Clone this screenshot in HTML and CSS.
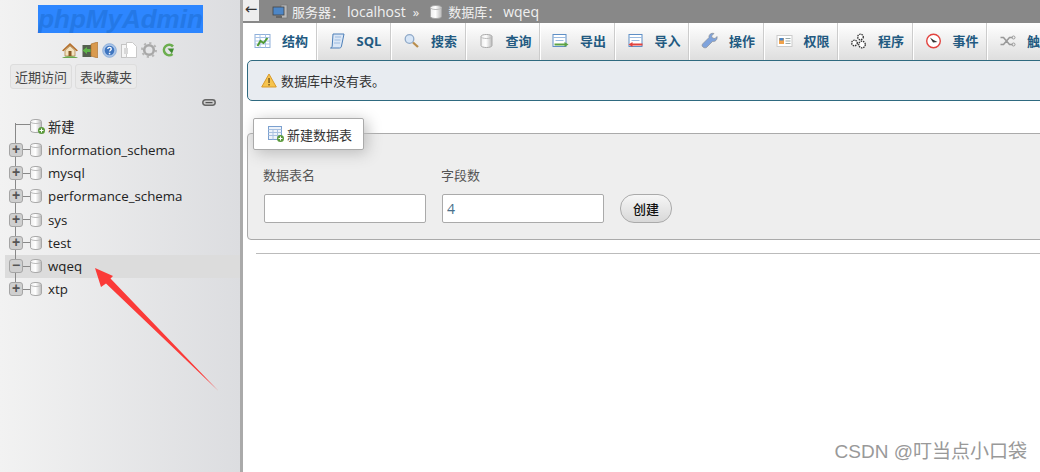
FILE: index.html
```html
<!DOCTYPE html>
<html lang="zh">
<head>
<meta charset="utf-8">
<title>phpMyAdmin</title>
<link rel="stylesheet" href="styles.css">
</head>
<body>
<svg class="defs" width="0" height="0" aria-hidden="true">
  <defs>
    <linearGradient id="dbg" x1="0" x2="1" y1="0" y2="0"><stop offset="0" stop-color="#eee"/><stop offset=".45" stop-color="#fff"/><stop offset="1" stop-color="#bbb"/></linearGradient>
    <symbol id="db" viewBox="0 0 12 14">
      <path d="M.5 2.500C.5 1.200 3 .5 6 .5s5.500.7 5.500 2v9c0 1.300-2.500 2-5.500 2s-5.500-.7-5.500-2z" fill="url(#dbg)" stroke="#a8a8a8"/>
      <path d="M.5 2.500c0 1.300 2.500 2 5.500 2s5.500-.7 5.500-2" fill="none" stroke="#bbb"/>
    </symbol>
  </defs>
</svg>
<div class="page">
  <aside class="sidebar">
    <div class="logo"><span class="logo-text">phpMyAdmin</span></div>
    <div class="quick-icons">
      <svg width="16" height="16" viewBox="0 0 16 16"><path d="M0 8.500L8 1l8 7.500-1.500.8L8 3.500 1.500 9.300z" fill="#b5702c"/><path d="M3 8.500L8 4l5 4.500V14H3z" fill="#f3e3c0" stroke="#a97b3c" stroke-width=".7"/><rect x="6.500" y="9" width="3" height="5" fill="#8a5a24"/><path d="M0 16c2-2.500 14-2.500 16 0z" fill="#6aa84f"/></svg>
      <svg width="16" height="16" viewBox="0 0 16 16"><rect x=".5" y="3" width="9" height="12" fill="#55604f"/><path d="M9 2l6.500-2v16L9 14z" fill="#d99a4e" stroke="#a86c26" stroke-width=".6"/><path d="M.5 8.500L5 5v2h3.500v3H5v2z" fill="#5fb548"/></svg>
      <svg width="15" height="15" viewBox="0 0 15 15"><circle cx="7.500" cy="7.500" r="6.800" fill="#a9c4e8" stroke="#8fb0da"/><circle cx="7.500" cy="7.500" r="4.800" fill="#3f75bf"/><path d="M5.800 6c0-2.200 3.500-2.200 3.500 0 0 1.300-1.700 1.300-1.700 2.600" fill="none" stroke="#fff" stroke-width="1.300"/><rect x="6.800" y="9.800" width="1.500" height="1.500" fill="#fff"/></svg>
      <svg width="16" height="16" viewBox="0 0 16 16"><rect x=".5" y="2.500" width="9" height="13" fill="#f5f5f5" stroke="#c4c4c4"/><path d="M5.500.5h6l4 4v11h-10z" fill="#fff" stroke="#c9c9c9"/><rect x="3" y="6" width="4" height="6" fill="#d8d8d8"/></svg>
      <svg width="16" height="16" viewBox="0 0 16 16"><circle cx="8" cy="8" r="4.800" fill="none" stroke="#a8a8a8" stroke-width="2.600"/><circle cx="8" cy="8" r="7" fill="none" stroke="#b5b5b5" stroke-width="2" stroke-dasharray="2.200 3.300"/></svg>
      <svg width="14" height="16" viewBox="0 0 14 16"><path d="M12 4.500A5.200 5.200 0 1 0 11.500 12" fill="none" stroke="#6cae4f" stroke-width="2.600"/><path d="M6.500 6.500h6.500L11 11.500z" fill="#3f8c2f"/></svg>
    </div>
    <div class="nav-tabs">
      <span class="nav-btn">近期访问</span>
      <span class="nav-btn">表收藏夹</span>
    </div>
    <div class="link-row">
      <svg width="14" height="7" viewBox="0 0 14 7"><rect x=".8" y=".8" width="12.400" height="5.400" rx="2.700" fill="#ccc" stroke="#666" stroke-width="1.500"/><rect x="3.500" y="3" width="7" height="1.200" fill="#555"/></svg>
    </div>
    <ul class="tree">
      <li class="row row-first">
        <span class="exp exp-none"></span><span class="conn conn-long"></span>
        <span class="db-wrap"><svg class="db-icon" width="12" height="14"><use href="#db"/></svg><svg class="db-plus" width="7" height="7" viewBox="0 0 7 7"><circle cx="3.500" cy="3.500" r="3.500" fill="#5b9a3c"/><path d="M1.500 3.500h4M3.500 1.500v4" stroke="#fff"/></svg></span>
        <span class="name">新建</span>
      </li>
      <li class="row"><span class="exp">+</span><span class="conn"></span><svg class="db-icon" width="12" height="14"><use href="#db"/></svg><span class="name">information_schema</span></li>
      <li class="row"><span class="exp">+</span><span class="conn"></span><svg class="db-icon" width="12" height="14"><use href="#db"/></svg><span class="name">mysql</span></li>
      <li class="row"><span class="exp">+</span><span class="conn"></span><svg class="db-icon" width="12" height="14"><use href="#db"/></svg><span class="name">performance_schema</span></li>
      <li class="row"><span class="exp">+</span><span class="conn"></span><svg class="db-icon" width="12" height="14"><use href="#db"/></svg><span class="name">sys</span></li>
      <li class="row"><span class="exp">+</span><span class="conn"></span><svg class="db-icon" width="12" height="14"><use href="#db"/></svg><span class="name">test</span></li>
      <li class="row row-active"><span class="exp">−</span><span class="conn"></span><svg class="db-icon" width="12" height="14"><use href="#db"/></svg><span class="name">wqeq</span></li>
      <li class="row row-last"><span class="exp">+</span><span class="conn"></span><svg class="db-icon" width="12" height="14"><use href="#db"/></svg><span class="name">xtp</span></li>
    </ul>
  </aside>

  <main class="main">
    <div class="topbar">
      <span class="back">←</span>
      <svg class="crumb-icon" width="16" height="15" viewBox="0 0 16 15"><rect x="9" y="1" width="6" height="13" fill="#b8b8b8" stroke="#777" stroke-width=".7"/><rect x="1" y="3" width="11" height="8" fill="#4d86c6" stroke="#444" stroke-width=".8"/><rect x="4" y="12" width="6" height="2" fill="#666"/></svg>
      <span class="crumb">服务器：</span>
      <span class="crumb crumb-val">localhost</span>
      <span class="crumb crumb-sep">»</span>
      <svg class="crumb-db" width="12" height="14"><use href="#db"/></svg>
      <span class="crumb crumb-second">数据库：</span>
      <span class="crumb crumb-val">wqeq</span>
    </div>

    <nav class="tabs">
      <a class="tab tab-active">
        <svg width="16" height="16" viewBox="0 0 16 16"><rect x=".5" y="1.500" width="15" height="13" fill="#fff" stroke="#8fb0da"/><path d="M5.500 1.500v13M11 1.500v13M.5 4.500h15M.5 8h15M.5 11h15" stroke="#a9c4e8"/><path d="M3 13l3-5 3 2 4-5" fill="none" stroke="#4f9a33" stroke-width="2"/></svg>
        <span>结构</span></a>
      <a class="tab"><svg width="16" height="16" viewBox="0 0 16 16"><path d="M3.500 1h11l-2.500 12c-.3 1.500-1 2-2 2H1c1 0 1.500-.7 1.700-2z" fill="#dbe7f6" stroke="#4c7fb8"/><path d="M5.500 4h6M5 7h6M4.500 10h6" stroke="#9bbbe0"/></svg><span>SQL</span></a>
      <a class="tab"><svg width="16" height="16" viewBox="0 0 16 16"><circle cx="6" cy="6" r="4.300" fill="#d7e6f7" stroke="#8fa9c8" stroke-width="1.300"/><path d="M9.500 9.500l5 4.500" stroke="#b98d4c" stroke-width="2.300"/></svg><span>搜索</span></a>
      <a class="tab"><svg width="12" height="14" class="tab-db"><use href="#db"/></svg><span>查询</span></a>
      <a class="tab"><svg width="16" height="16" viewBox="0 0 16 16"><rect x=".5" y="1.500" width="13" height="12" fill="#fff" stroke="#5f8fc6"/><path d="M.5 4.500h13M3 7.500h8" stroke="#9bbbe0"/><path d="M2 10.500h10V9l4 2.500-4 2.500v-1.500H2z" fill="#5da345"/></svg><span>导出</span></a>
      <a class="tab"><svg width="16" height="16" viewBox="0 0 16 16"><rect x="1.500" y="1.500" width="13" height="12" fill="#fff" stroke="#5f8fc6"/><path d="M1.500 4.500h13M4 7.500h8" stroke="#9bbbe0"/><path d="M15 10.500H5V9l-4 2.500L5 14v-1.500h10z" fill="#e2433f"/></svg><span>导入</span></a>
      <a class="tab"><svg width="17" height="17" viewBox="0 0 17 17"><path d="M2 15c-1.500-1-1-2.500 0-3.500l6-6c-.5-2.500 2-5 5-4l-2.500 2.500 1 2L14 6.500l2-2c.8 3-1.800 5.500-4.500 5l-6 6C4.500 16 3 16 2 15z" fill="#7fa3dc" stroke="#888" stroke-width=".6"/></svg><span>操作</span></a>
      <a class="tab"><svg width="16" height="14" viewBox="0 0 16 14"><rect x=".5" y="1.500" width="15" height="11" fill="#fff" stroke="#ccc"/><rect x="2.500" y="4" width="5" height="6" fill="#f0a24a"/><rect x="3" y="4" width="4" height="2.500" fill="#4d86c6"/><path d="M9 4.500h5M9 7h5M9 9.500h5" stroke="#9aa"/></svg><span>权限</span></a>
      <a class="tab"><svg width="16" height="16" viewBox="0 0 16 16"><g fill="#fff" stroke="#333" stroke-width="1.300" stroke-dasharray="1.500 .8"><circle cx="10" cy="4" r="2.800"/><circle cx="4" cy="10" r="2.800"/><circle cx="11.500" cy="11.500" r="3.300"/></g></svg><span>程序</span></a>
      <a class="tab"><svg width="16" height="16" viewBox="0 0 16 16"><circle cx="8" cy="8" r="6.800" fill="#fff" stroke="#e2433f" stroke-width="1.400"/><path d="M4.500 4.500L8 7l4 2-4.500 .5z" fill="#333"/></svg><span>事件</span></a>
      <a class="tab"><svg width="16" height="12" viewBox="0 0 16 12"><path d="M1 2.500h3l6 7h3M1 9.500h3l6-7h3" fill="none" stroke="#999" stroke-width="1.600"/><circle cx="14" cy="2.500" r="1.500" fill="none" stroke="#999"/><circle cx="14" cy="9.500" r="1.500" fill="none" stroke="#999"/></svg><span>触发器</span></a>
    </nav>

    <div class="content">
      <div class="notice">
        <svg width="16" height="15" viewBox="0 0 16 15"><path d="M8 1l7.300 13H.7z" fill="#f6c44e" stroke="#d99a2b"/><rect x="7.300" y="5" width="1.500" height="5" fill="#7a5a1e"/><rect x="7.300" y="11" width="1.500" height="1.500" fill="#7a5a1e"/></svg>
        <span>数据库中没有表。</span>
      </div>

      <section class="panel">
        <div class="panel-legend">
          <svg width="16" height="16" viewBox="0 0 16 16"><rect x=".5" y=".5" width="13" height="13" fill="#eef3fa" stroke="#7ba0cf"/><path d="M.5 3.500h13M.5 6.500h13M.5 9.500h13M5 3.500v10M9.500 3.500v10" stroke="#a9c1e0"/><circle cx="12.500" cy="12.500" r="3.500" fill="#5b9a3c"/><path d="M10.500 12.500h4M12.500 10.500v4" stroke="#fff"/></svg>
          <span>新建数据表</span>
        </div>
        <div class="form-row">
          <label class="field"><span class="field-label">数据表名</span><input class="input" type="text"></label>
          <label class="field"><span class="field-label">字段数</span><input class="input" type="text" value="4"></label>
          <button class="go" type="button">创建</button>
        </div>
      </section>

      <hr class="rule">
    </div>
  </main>
</div>

<svg class="arrow" width="1040" height="472" viewBox="0 0 1040 472" aria-hidden="true"><polygon points="95,268 113,276 110.500,278.500 218.500,391 106,283.500 101,287" fill="#fb3a38"/></svg>
<div class="watermark">CSDN @叮当点小口袋</div>
</body>
</html>
```
FILE: styles.css
```css
* { box-sizing: border-box; }
html, body { margin: 0; height: 472px; overflow: hidden; background: #fff; }
body {
  position: relative;
  font-family: "Open Sans", "Noto Sans CJK SC", sans-serif;
  font-size: 13px;
  color: #444;
}
.defs { position: absolute; }
.page { display: flex; height: 472px; }

/* sidebar */
.sidebar {
  width: 243px;
  flex: none;
  border-right: 3px solid #aaa;
  background: linear-gradient(90deg, #f2f2f2, #dcdde0);
}
.logo {
  width: 165px;
  height: 28px;
  margin: 5px 0 0 38px;
  background: #2d86ff;
  display: flex;
  align-items: center;
  justify-content: center;
}
.logo-text {
  font: italic bold 26px/28px "Liberation Sans", sans-serif;
  color: #2478e6;
  white-space: nowrap;
}
.quick-icons {
  display: flex;
  align-items: center;
  gap: 4px;
  margin: 8px 0 0 62px;
  height: 18px;
}
.nav-tabs { display: flex; gap: 3px; margin: 5px 0 0 10px; }
.nav-btn {
  width: 62px;
  height: 25px;
  border: 1px solid #ddd;
  border-radius: 3px;
  background: #eaeaea;
  text-align: center;
  font-size: 13px;
  line-height: 24px;
  color: #444;
}
.link-row { height: 7px; margin: 10px 0 0 202px; display: flex; }
.tree { list-style: none; margin: 9px 0 0; padding: 0; color: #222; }
.row {
  height: 23.250px;
  margin-left: 5px;
  padding-left: 4px;
  display: flex;
  align-items: center;
  font-size: 13.300px;
  background: linear-gradient(#888, #888) 10px 0 / 1px 100% no-repeat;
}
.row-first { background: linear-gradient(#888, #888) 10px 8px / 1px 100% no-repeat; }
.row-last { background: linear-gradient(#888, #888) 10px 0 / 1px 50% no-repeat; }
.row-active { background-color: #dcdcdc; }
.exp {
  width: 14px;
  height: 14px;
  flex: none;
  border: 1px solid #a5a5a5;
  border-radius: 3px;
  background: #cfcfcf;
  color: #555;
  font: bold 14px/11px "Liberation Sans", sans-serif;
  text-align: center;
}
.exp-none { visibility: hidden; }
.conn { width: 7px; height: 1px; flex: none; background: #888; }
.conn-long { width: 14px; margin-left: -7px; margin-top: -4px; }
.db-icon { flex: none; display: block; }
.db-wrap { position: relative; flex: none; width: 12px; height: 14px; margin-top: -1px; }
.db-plus { position: absolute; right: -3px; bottom: -1px; }
.name { margin-left: 6px; white-space: nowrap; line-height: 18px; }

/* main */
.main { flex: 1; min-width: 0; overflow: hidden; }
.topbar {
  height: 23px;
  background: #888;
  display: flex;
  align-items: center;
  color: #f0f0f0;
  font-size: 13px;
  white-space: nowrap;
}
.back {
  width: 16px;
  height: 21px;
  align-self: flex-start;
  flex: none;
  background: #eee;
  color: #333;
  font: 15px/19px "DejaVu Sans", sans-serif;
  text-align: center;
}
.crumb-icon { margin-left: 13px; flex: none; }
.crumb { margin-left: 4px; }
.crumb-val { margin-left: 3px; font-size: 14px; }
.crumb-sep { margin-left: 7px; }
.crumb-db { margin-left: 11px; flex: none; }
.crumb-second { margin-left: 6px; }

.tabs { display: flex; height: 37px; white-space: nowrap; }
.tab {
  width: 74.500px;
  flex: none;
  display: flex;
  align-items: center;
  padding: 0 0 2px 11px;
  background: linear-gradient(#fff, #dedede);
  border-right: 1px solid #fff;
  box-shadow: inset -1px 0 0 #ccc;
  color: #235a81;
  font-weight: bold;
  font-size: 13px;
}
.tab svg { width: 17px; flex: none; }
.tab span { margin-left: 11px; }
.tab-active { background: #fff; }

.content { padding-left: 4px; }
.notice {
  width: 830px;
  height: 41px;
  display: flex;
  align-items: center;
  gap: 4px;
  padding-left: 13px;
  background: #e8ecf1;
  border: 1px solid #2f6a80;
  border-radius: 5px;
  color: #333;
}
.panel {
  position: relative;
  width: 830px;
  height: 107px;
  margin-top: 32px;
  padding: 33px 0 0 16px;
  background: #eee;
  border: 1px solid #aaa;
  border-radius: 4px;
}
.panel-legend {
  position: absolute;
  left: 5px;
  top: -16px;
  width: 111px;
  height: 32px;
  display: flex;
  align-items: center;
  gap: 3px;
  padding-left: 14px;
  background: #fff;
  border: 1px solid #aaa;
  border-radius: 2px;
  box-shadow: 3px 3px 15px #bbb;
  color: #333;
}
.form-row { display: flex; align-items: flex-end; }
.field { display: flex; flex-direction: column; width: 162px; margin-right: 16px; }
.field-label { height: 27px; line-height: 16px; margin-left: -1px; color: #555; }
.input {
  width: 162px;
  height: 29px;
  padding: 0 4px;
  border: 1px solid #aaa;
  border-radius: 2px;
  background: #fff;
  color: #4a6f8a;
  font: 14px "Open Sans", sans-serif;
}
.go {
  width: 52px;
  height: 29px;
  padding: 0;
  border: 1px solid #aaa;
  border-radius: 14px;
  background: linear-gradient(#f6f6f6, #d8d8d8);
  color: #111;
  font: 500 13px "Noto Sans CJK SC", sans-serif;
}
.rule { width: 830px; height: 1px; margin: 13px 0 0 9px; border: 0; background: #bbb; }

/* overlays */
.arrow { position: absolute; left: 0; top: 0; pointer-events: none; }
.watermark {
  position: absolute;
  right: 13px;
  top: 441px;
  font: 19px/22px "Liberation Sans", "Noto Sans CJK SC", sans-serif;
  color: #999;
  white-space: nowrap;
}
```
